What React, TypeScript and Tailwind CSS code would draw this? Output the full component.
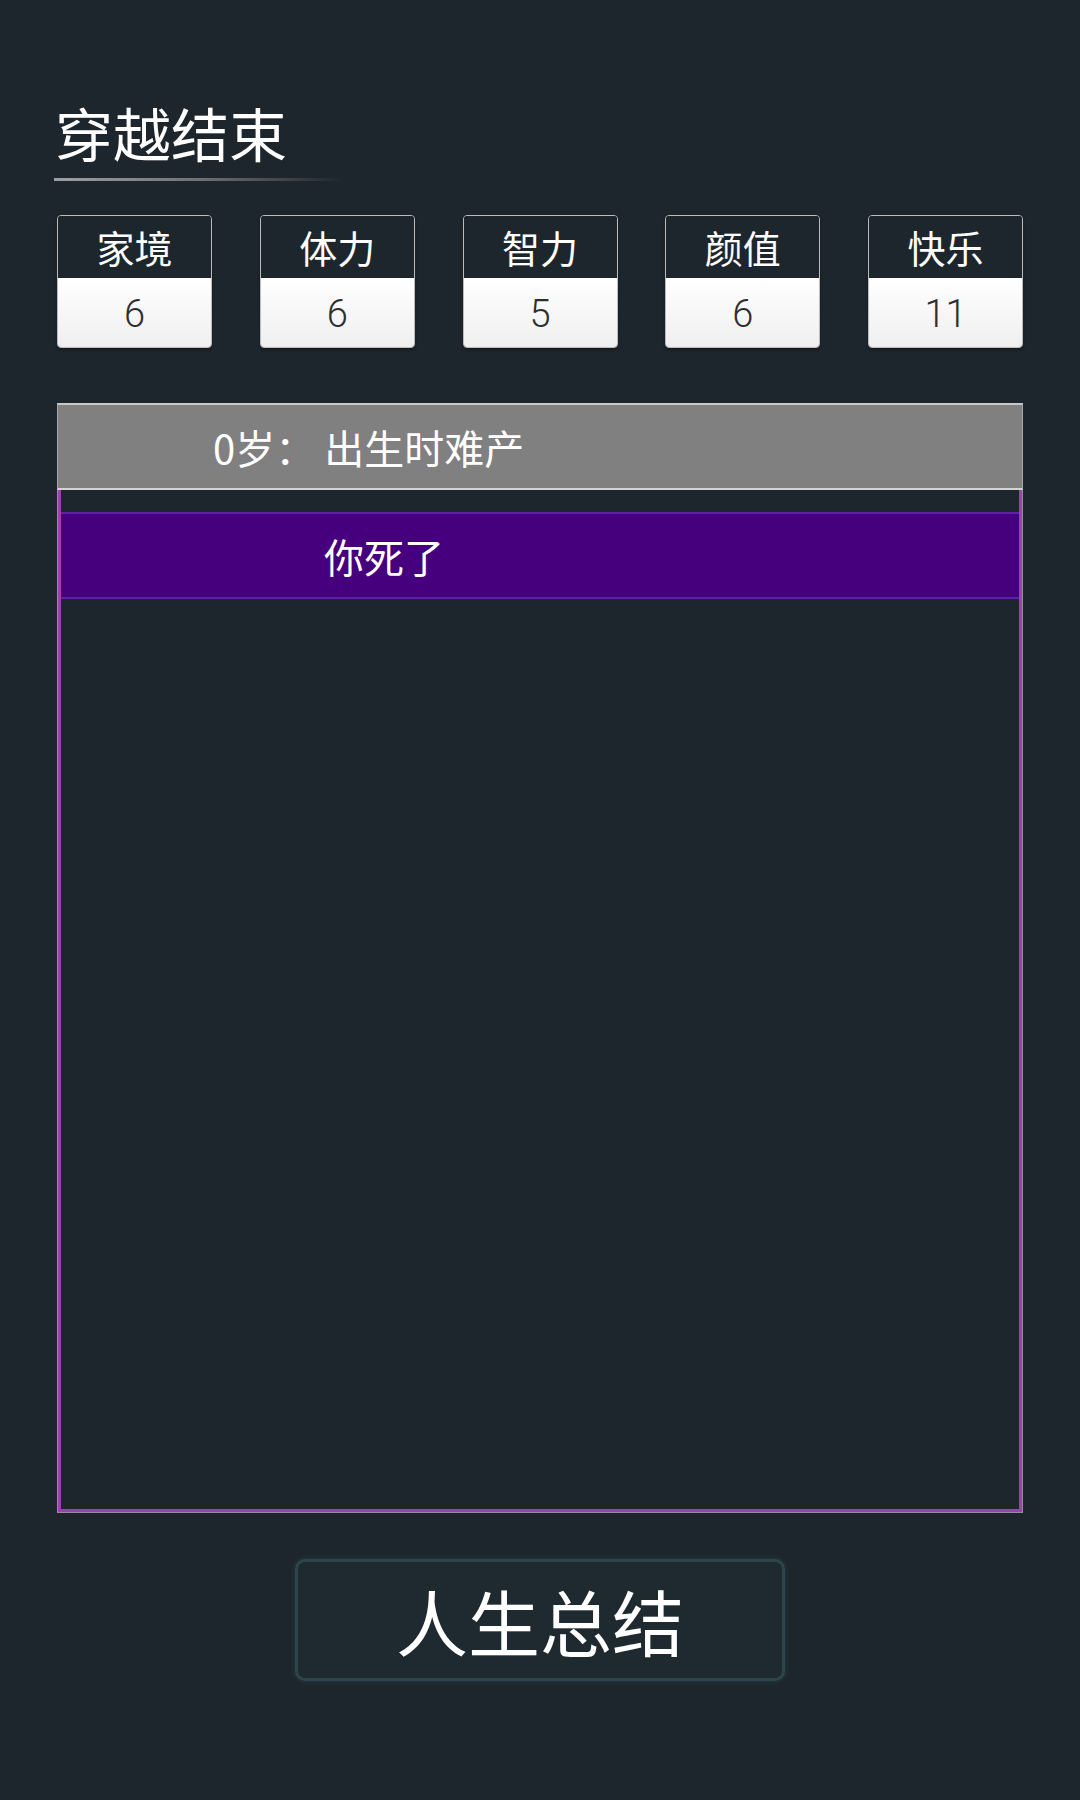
const STATS = [
  { label: '家境', value: 6 },
  { label: '体力', value: 6 },
  { label: '智力', value: 5 },
  { label: '颜值', value: 6 },
  { label: '快乐', value: 11 },
]

const CJK = "font-['Noto_Sans_CJK_SC','Noto_Sans',sans-serif]"

function StatBox({ label, value }: { label: string; value: number }) {
  return (
    <div className="flex h-[133px] w-[155px] flex-col overflow-hidden rounded-[4px] border border-[#b9bdc0] shadow-[0_2px_3px_rgba(0,0,0,0.35)]">
      <div className={`flex h-[62px] items-center justify-center bg-[#1e262d] text-[38px] leading-none text-white ${CJK}`}>
        {label}
      </div>
      <div className="flex flex-1 items-center justify-center bg-linear-to-b from-white to-[#efefef] pt-[3px] font-['Roboto','Liberation_Sans',sans-serif] text-[38px] leading-none font-light text-[#2e2e2e]">
        {value}
      </div>
    </div>
  )
}

export default function App() {
  return (
    <div className={`flex min-h-[1800px] w-[1080px] flex-col bg-[#1e262d] px-[57px] ${CJK}`}>
      {/* header */}
      <h1 className="mt-[103px] ml-[-2px] text-[58px] leading-none font-normal text-white">穿越结束</h1>
      <div className="mt-[17px] ml-[-3px] h-[3px] w-[290px] bg-linear-to-r from-[#9aa2a8] via-[#6b7378] to-transparent" />

      {/* attributes */}
      <div className="mt-[34px] flex justify-between">
        {STATS.map((s) => (
          <StatBox key={s.label} label={s.label} value={s.value} />
        ))}
      </div>

      {/* life events */}
      <div className="mt-[55px] flex flex-col">
        <div className="flex h-[87px] items-center border-t-2 border-b-2 border-x border-t-[#c9c9c9] border-b-[#d4d4d4] border-x-[#a8a8a8] bg-[#808080] pl-[155px] text-[40px] leading-none text-white">
          0岁：&nbsp;出生时难产
        </div>
        <div className="h-[1023px] border-x border-b border-[#9a8aa0]">
          <div className="h-full border-x-[3px] border-b-[3px] border-[#9e40b0] pt-[22px]">
            <div className="flex h-[87px] items-center border-y-2 border-[#5f1fa8] bg-[#46007e] pl-[263px] text-[40px] leading-none text-white">
              你死了
            </div>
          </div>
        </div>
      </div>

      {/* summary button */}
      <div className="mt-[46px] flex justify-center">
        <button className="flex h-[122px] w-[490px] items-center justify-center rounded-[10px] border-[3px] border-[#2b454b] bg-[#1f2930] text-[72px] leading-none text-white shadow-[0_0_4px_rgba(60,110,120,0.35)]">
          人生总结
        </button>
      </div>
    </div>
  )
}
